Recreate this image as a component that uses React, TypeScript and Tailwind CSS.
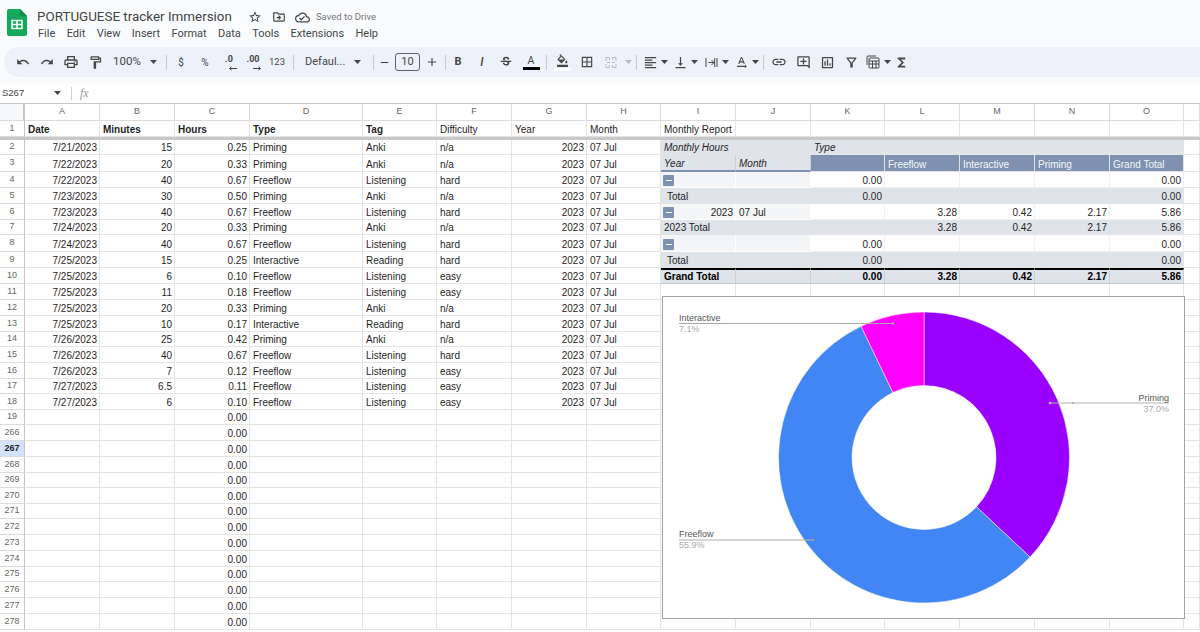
import React from "react";
import {
  MdUndo, MdRedo, MdOutlinePrint, MdOutlineFormatPaint, MdStrikethroughS, MdFormatColorFill, MdBorderAll,
  MdFormatAlignLeft, MdVerticalAlignBottom, MdTextRotationNone, MdLink, MdOutlineAddComment, MdOutlineInsertChart,
  MdOutlineFilterAlt, MdFunctions, MdOutlineStarBorder, MdOutlineDriveFileMove, MdOutlineCloudDone, MdAdd, MdRemove,
} from "react-icons/md";

const cellBase = "flex items-end overflow-hidden whitespace-nowrap border-r border-b border-[#e4e4e4] text-[10px] leading-[13px] text-[#1f1f1f]";
const hdr = "flex items-center justify-center border-r border-b border-[#dcdcdc] bg-white text-[9px] text-[#666]";
const rowHdr = "flex items-center justify-center border-r border-b border-r-[#c4c4c4] border-b-[#dcdcdc] bg-white text-[9px] text-[#666]";

const data: string[][] = [
  ["7/21/2023", "15", "0.25", "Priming", "Anki", "n/a"],
  ["7/22/2023", "20", "0.33", "Priming", "Anki", "n/a"],
  ["7/22/2023", "40", "0.67", "Freeflow", "Listening", "hard"],
  ["7/23/2023", "30", "0.50", "Priming", "Anki", "n/a"],
  ["7/23/2023", "40", "0.67", "Freeflow", "Listening", "hard"],
  ["7/24/2023", "20", "0.33", "Priming", "Anki", "n/a"],
  ["7/24/2023", "40", "0.67", "Freeflow", "Listening", "hard"],
  ["7/25/2023", "15", "0.25", "Interactive", "Reading", "hard"],
  ["7/25/2023", "6", "0.10", "Freeflow", "Listening", "easy"],
  ["7/25/2023", "11", "0.18", "Freeflow", "Listening", "easy"],
  ["7/25/2023", "20", "0.33", "Priming", "Anki", "n/a"],
  ["7/25/2023", "10", "0.17", "Interactive", "Reading", "hard"],
  ["7/26/2023", "25", "0.42", "Priming", "Anki", "n/a"],
  ["7/26/2023", "40", "0.67", "Freeflow", "Listening", "hard"],
  ["7/26/2023", "7", "0.12", "Freeflow", "Listening", "easy"],
  ["7/27/2023", "6.5", "0.11", "Freeflow", "Listening", "easy"],
  ["7/27/2023", "6", "0.10", "Freeflow", "Listening", "easy"],
];

const rowLabels = [2, 3, 4, 5, 6, 7, 8, 9, 10, 11, 12, 13, 14, 15, 16, 17, 18, 19, 266, 267, 268, 269, 270, 271, 272, 273, 274, 275, 276, 277, 278];

type Kind = "l" | "d" | "p" | "w" | "g" | "k";
type P = { t?: string; k: Kind; i?: boolean; r?: boolean; m?: boolean };
const blank = (k: Kind): P => ({ k });
const num = (t: string, k: Kind): P => ({ t, k, r: true });
const pivot: Record<number, P[]> = {
  2: [{ t: "Monthly Hours", k: "l", i: true }, blank("l"), { t: "Type", k: "l", i: true }, blank("l"), blank("l"), blank("l"), blank("l")],
  3: [{ t: "Year", k: "p", i: true }, { t: "Month", k: "p", i: true }, blank("d"), { t: "Freeflow", k: "d" }, { t: "Interactive", k: "d" }, { t: "Priming", k: "d" }, { t: "Grand Total", k: "d" }],
  4: [{ k: "w", m: true }, blank("w"), num("0.00", "k"), blank("k"), blank("k"), blank("k"), num("0.00", "k")],
  5: [{ t: " Total", k: "l" }, blank("l"), num("0.00", "l"), blank("l"), blank("l"), blank("l"), num("0.00", "l")],
  6: [{ t: "2023", k: "w", m: true, r: true }, { t: "07 Jul", k: "w" }, blank("k"), num("3.28", "k"), num("0.42", "k"), num("2.17", "k"), num("5.86", "k")],
  7: [{ t: "2023 Total", k: "l" }, blank("l"), blank("l"), num("3.28", "l"), num("0.42", "l"), num("2.17", "l"), num("5.86", "l")],
  8: [{ k: "w", m: true }, blank("w"), num("0.00", "k"), blank("k"), blank("k"), blank("k"), num("0.00", "k")],
  9: [{ t: " Total", k: "l" }, blank("l"), num("0.00", "l"), blank("l"), blank("l"), blank("l"), num("0.00", "l")],
  10: [{ t: "Grand Total", k: "g" }, blank("g"), num("0.00", "g"), num("3.28", "g"), num("0.42", "g"), num("2.17", "g"), num("5.86", "g")],
};

const kindClass = (k: Kind) => {
  if (k === "l") return "bg-[#dfe3ea] border-[#cbd0d8]";
  if (k === "p") return "bg-[#dfe3ea] border-r-[#cbd0d8] border-b-2 border-b-[#7f91b1]";
  if (k === "d") return "bg-[#7f91b1] border-[#8494b3] font-medium !text-[#f6f8fb]";
  if (k === "w") return "bg-[#f4f5f7] border-white";
  if (k === "g") return "bg-[#dfe3ea] border-r-[#cbd0d8] border-b-[#c4c9d1] border-t-2 border-t-black font-bold !text-black";
  return "bg-white border-[#f1f1f1]";
};

function Minus() {
  return (
    <span className="absolute bottom-[1px] left-[2px] flex h-[11px] w-[11px] items-center justify-center rounded-[1px] bg-[#7f91b1]">
      <span className="h-[1.5px] w-[6px] bg-white" />
    </span>
  );
}

function polar(r: number, deg: number): [number, number] {
  const a = (deg * Math.PI) / 180;
  return [261 + r * Math.sin(a), 160.5 - r * Math.cos(a)];
}
function slice(from: number, to: number) {
  const R = 145.5, r = 72;
  const [x1, y1] = polar(R, from), [x2, y2] = polar(R, to), [x3, y3] = polar(r, to), [x4, y4] = polar(r, from);
  const large = to - from > 180 ? 1 : 0;
  return `M${x1} ${y1}A${R} ${R} 0 ${large} 1 ${x2} ${y2}L${x3} ${y3}A${r} ${r} 0 ${large} 0 ${x4} ${y4}Z`;
}

function Chart() {
  return (
    <div className="absolute left-[662px] top-[192px] h-[323px] w-[523px] border border-[#a3a3a3] bg-white">
      <svg width="521" height="321" className="absolute left-0 top-0">
        <path d={slice(0, 133.2)} fill="#9900ff" stroke="#fff" strokeWidth="0.5" />
        <path d={slice(133.2, 334.4)} fill="#4285f4" stroke="#fff" strokeWidth="0.5" />
        <path d={slice(334.4, 360)} fill="#ff00ff" stroke="#fff" strokeWidth="0.5" />
        <path d="M16 26.5H230" stroke="#a8a8a8" strokeWidth="1.2" />
        <circle cx="230" cy="26.5" r="1.3" fill="#a8a8a8" />
        <path d="M387 106H506" stroke="#b4b4b4" strokeWidth="1.2" />
        <circle cx="387" cy="106" r="1.3" fill="#bbb" />
        <circle cx="410" cy="106" r="1" fill="#aaa" />
        <path d="M16 243H150" stroke="#b0b0b0" strokeWidth="1.2" />
        <circle cx="150" cy="243" r="1.3" fill="#999" />
      </svg>
      <div className="absolute left-[16px] top-[16px] text-[9px] leading-[11px] text-[#555]">Interactive</div>
      <div className="absolute left-[16px] top-[27px] text-[9px] leading-[11px] text-[#aaa]">7.1%</div>
      <div className="absolute right-[15px] top-[96px] text-[9px] leading-[11px] text-[#555]">Priming</div>
      <div className="absolute right-[15px] top-[107px] text-[9px] leading-[11px] text-[#aaa]">37.0%</div>
      <div className="absolute left-[16px] top-[232px] text-[9px] leading-[11px] text-[#555]">Freeflow</div>
      <div className="absolute left-[16px] top-[243px] text-[9px] leading-[11px] text-[#aaa]">55.9%</div>
    </div>
  );
}

function Caret({ className = "" }: { className?: string }) {
  return (
    <span className={`flex items-center justify-center ${className}`}>
      <svg width="7" height="4" viewBox="0 0 7 4"><path d="M0 0h7L3.5 4z" fill="currentColor" /></svg>
    </span>
  );
}
function Sep({ className = "" }: { className?: string }) {
  return <span className={`h-[15px] w-px bg-[#c7c9cc] ${className}`} />;
}
function Item({ children, className = "w-[24px]" }: { children?: React.ReactNode; className?: string }) {
  return <span className={`flex h-full shrink-0 items-center justify-center ${className}`}>{children}</span>;
}

function SheetsLogo() {
  return (
    <svg width="20" height="27" viewBox="0 0 20 27" className="shrink-0">
      <path d="M2 0h11l7 7v18a2 2 0 0 1-2 2H2a2 2 0 0 1-2-2V2a2 2 0 0 1 2-2z" fill="#12a95a" />
      <path d="M13 0l7 7h-5a2 2 0 0 1-2-2z" fill="#0c8a48" />
      <path d="M5 11.5h10v8H5z" fill="none" stroke="#fff" strokeWidth="1.5" />
      <path d="M5 15.5h10M10 11.5v8" stroke="#fff" strokeWidth="1.5" />
    </svg>
  );
}

export default function App() {
  const cols = ["A", "B", "C", "D", "E", "F", "G", "H", "I", "J", "K", "L", "M", "N", "O"];
  const body: React.ReactNode[] = [];
  rowLabels.forEach((n, ri) => {
    const d = data[ri];
    const sel = n === 267;
    body.push(
      <div key={`h${n}`} className={sel ? "flex items-center justify-center border-r border-b border-r-[#c4c4c4] border-b-[#dcdcdc] bg-[#d3e3fd] text-[9px] font-bold text-[#1f1f1f]" : rowHdr}>{n}</div>
    );
    for (let c = 0; c < 16; c++) {
      let text: string | undefined;
      let right = false;
      if (c <= 2) { right = true; }
      if (d) {
        if (c < 6) text = d[c];
        if (c === 6) { text = "2023"; right = true; }
        if (c === 7) text = "07 Jul";
      } else if (c === 2) text = "0.00";
      if (c >= 8 && c <= 14 && pivot[n]) {
        const p = pivot[n][c - 8];
        body.push(
          <div key={`${n}-${c}`} className={`${cellBase} relative ${kindClass(p.k)} ${p.r ? "justify-end pr-[2px]" : "pl-[3px]"} ${p.i ? "italic" : ""}`}>
            {p.m && <Minus />}
            <span className={p.t === " Total" ? "pl-[3px]" : ""}>{p.t?.trim()}</span>
          </div>
        );
        continue;
      }
      body.push(
        <div key={`${n}-${c}`} className={`${cellBase} ${right ? "justify-end pr-[2px]" : "pl-[3px]"}`}>{text}</div>
      );
    }
  });

  return (
    <div className="h-[632px] w-[1200px] overflow-hidden bg-white" style={{ fontFamily: "'Liberation Sans', sans-serif" }}>
      <div className="flex h-[83px] flex-col bg-[#f9fbfd]">
        <div className="flex h-[47px] shrink-0 pl-[7px] pt-[9px]" style={{ fontFamily: "Roboto, sans-serif" }}>
          <SheetsLogo />
          <div className="ml-[10px] flex flex-col">
            <div className="flex h-[16px] items-center">
              <span className="text-[13.4px] leading-[16px] text-[#444]">PORTUGUESE tracker Immersion</span>
              <MdOutlineStarBorder className="ml-[16px] text-[14px] text-[#444746]" />
              <MdOutlineDriveFileMove className="ml-[10px] text-[14px] text-[#444746]" />
              <MdOutlineCloudDone className="ml-[9px] text-[15px] text-[#444746]" />
              <span className="ml-[6px] text-[9.5px] text-[#777]">Saved to Drive</span>
            </div>
            <div className="mt-[2px] flex gap-[11.4px] pl-px text-[11px] leading-[14px] text-[#444746]">
              {["File", "Edit", "View", "Insert", "Format", "Data", "Tools", "Extensions", "Help"].map((m) => <span key={m}>{m}</span>)}
            </div>
          </div>
        </div>
        <div className="ml-[4px] flex h-[30px] items-center rounded-l-[15px] bg-[#edf2fa] pl-[7px] text-[#444746]" style={{ fontFamily: "Roboto, sans-serif" }}>
          <Item><MdUndo className="text-[14px]" /></Item>
          <Item><MdRedo className="text-[14px]" /></Item>
          <Item><MdOutlinePrint className="text-[16px]" /></Item>
          <Item><MdOutlineFormatPaint className="text-[15px]" /></Item>
          <Item className="w-[40px] text-[11.5px]">100%</Item>
          <Caret className="w-[12px]" />
          <Sep className="ml-[7px] mr-[2px]" />
          <Item className="w-[24px] text-[10px]">$</Item>
          <Item className="w-[24px] text-[10px]">%</Item>
          <Item>
            <span className="relative flex h-[18px] w-[16px] justify-center text-[9px] font-bold leading-[12px]">.0
              <svg width="9" height="5" viewBox="0 0 9 5" className="absolute bottom-0 right-0"><path d="M9 2.5H2M3.5.8 1.5 2.5l2 1.7" fill="none" stroke="currentColor" strokeWidth="1" /></svg>
            </span>
          </Item>
          <Item>
            <span className="relative flex h-[18px] w-[18px] justify-center text-[9px] font-bold leading-[12px]">.00
              <svg width="9" height="5" viewBox="0 0 9 5" className="absolute bottom-0 right-0"><path d="M0 2.5h7M5.5.8l2 1.7-2 1.7" fill="none" stroke="currentColor" strokeWidth="1" /></svg>
            </span>
          </Item>
          <Item className="w-[24px] text-[9.5px]">123</Item>
          <Sep className="ml-[4px] mr-[11px]" />
          <Item className="w-[44px] justify-start text-[11px]">Defaul...</Item>
          <Caret className="ml-[2px] w-[12px]" />
          <Sep className="ml-[10px] mr-[0px]" />
          <Item className="w-[20px]"><MdRemove className="text-[13px]" /></Item>
          <span className="ml-px flex h-[18px] w-[25px] items-center justify-center rounded-[3px] border border-[#5f6368] text-[11px]">10</span>
          <Item><MdAdd className="text-[14px]" /></Item>
          <Sep className="ml-px" />
          <Item className="w-[24px] text-[11px] font-bold">B</Item>
          <Item className="w-[24px] text-[12px] font-medium italic">I</Item>
          <Item><MdStrikethroughS className="text-[14px]" /></Item>
          <Item className="w-[26px]">
            <span className="flex flex-col items-center">
              <span className="text-[10.5px] leading-[11px]">A</span>
              <span className="mt-px h-[3px] w-[17px] bg-black" />
            </span>
          </Item>
          <Sep className="ml-[2px] mr-[3px]" />
          <Item>
            <span className="flex flex-col items-center">
              <MdFormatColorFill className="text-[13px]" />
              <span className="mt-px h-[3px] w-[17px] bg-white" />
            </span>
          </Item>
          <Item className="w-[26px]"><MdBorderAll className="text-[14px]" /></Item>
          <Item className="w-[22px] text-[#b9bcc0]">
            <svg width="12" height="13" viewBox="0 0 12 13" fill="none" stroke="currentColor" strokeWidth="1">
              <path d="M1 5V1.5h3.5V4M7.5 4V1.5H11V5M1 8v3.5h3.5V9M7.5 9v2.5H11V8M2 6.5h3M7 6.5h3" />
            </svg>
          </Item>
          <Caret className="w-[12px] text-[#b9bcc0]" />
          <Sep className="ml-[2px] mr-[3px]" />
          <Item className="w-[20px]"><MdFormatAlignLeft className="text-[15px]" /></Item>
          <Caret className="w-[8px]" />
          <Item className="ml-[2px] w-[20px]"><MdVerticalAlignBottom className="text-[15px]" /></Item>
          <Caret className="w-[8px]" />
          <Item className="ml-[3px] w-[20px]">
            <svg width="13" height="11" viewBox="0 0 13 11" fill="none" stroke="currentColor" strokeWidth="1">
              <path d="M1 1v9M12 1v9M3.5 5.5h5.5M6.5 3l2.5 2.5L6.5 8M9.7 1v9" />
            </svg>
          </Item>
          <Caret className="w-[8px]" />
          <Item className="ml-[2px] w-[20px]"><MdTextRotationNone className="text-[15px]" /></Item>
          <Caret className="w-[8px]" />
          <Sep className="ml-[4px] mr-[3px]" />
          <Item><MdLink className="text-[16px]" /></Item>
          <Item><MdOutlineAddComment className="text-[15px]" /></Item>
          <Item><MdOutlineInsertChart className="text-[15px]" /></Item>
          <Item><MdOutlineFilterAlt className="text-[15px]" /></Item>
          <Item className="w-[20px]">
            <svg width="14" height="14" viewBox="0 0 14 14" fill="none" stroke="currentColor" strokeWidth="1">
              <path d="M1 10V2a1 1 0 0 1 1-1h8" />
              <rect x="3" y="3" width="10" height="10" rx="1" />
              <path d="M3 6h10M3 9h10M6.5 6v7M10 6v7" />
            </svg>
          </Item>
          <Caret className="w-[8px]" />
          <Item className="ml-[3px]"><MdFunctions className="text-[15px]" /></Item>
        </div>
      </div>

      <div className="flex h-[20px] items-center bg-white text-[#444746]">
        <span className="w-[50px] pl-[2px] text-[9.5px]">S267</span>
        <Caret className="w-[14px]" />
        <span className="ml-[7px] h-[13px] w-px bg-[#d0d0d0]" />
        <span className="ml-[8px] text-[12px] italic text-[#9a9a9a]" style={{ fontFamily: "'Liberation Serif', serif" }}>fx</span>
      </div>

      <div className="relative grid grid-cols-[25px_75px_75px_75px_113px_74px_75px_75px_74px_75px_75px_74px_75px_75px_75px_74px_16px] grid-rows-[17px_16px_3px_15px_17px_16px_16px_16px_15px_17px_16px_16px_16px_16px_16px_15px_16px_16px_15px_16px_15px_16px_16px_16px_15px_16px_15px_16px_16px_16px_15px_16px_16px_16px_2px] border-t border-[#c8c8c8]">
        <div className="border-r-2 border-b border-r-[#c4c4c4] border-b-[#dcdcdc] bg-[#f8f9fa]" />
        {cols.map((c) => <div key={c} className={hdr}>{c}</div>)}
        <div className={hdr} />

        <div className={rowHdr}>1</div>
        {["Date", "Minutes", "Hours", "Type", "Tag", "Difficulty", "Year", "Month", "Monthly Report"].map((t, i) => (
          <div key={t} className={`${cellBase} pl-[3px] ${i < 5 ? "font-bold" : ""}`}>{t}</div>
        ))}
        {[0, 1, 2, 3, 4, 5, 6].map((i) => <div key={i} className={cellBase} />)}

        <div className="col-span-full bg-[#c8c8c8]" />
        {body}
        <Chart />
      </div>
    </div>
  );
}
